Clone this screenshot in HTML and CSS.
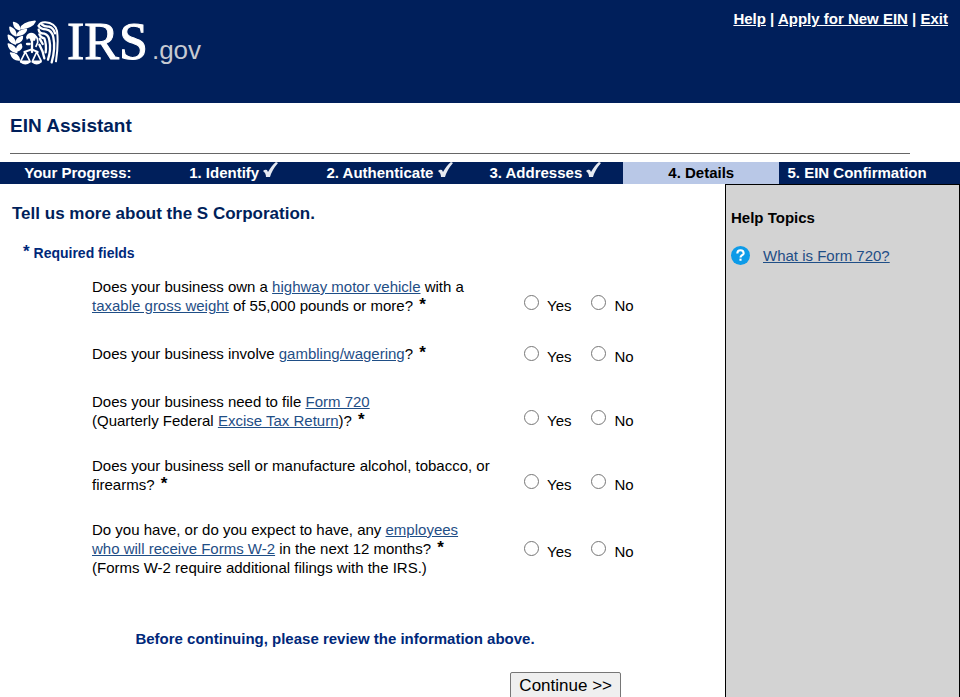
FILE: index.html
```html
<!DOCTYPE html>
<html lang="en">
<head>
    <meta charset="UTF-8">
    <meta name="viewport" content="width=device-width, initial-scale=1.0">
    <title>EIN Assistant</title>
    <link rel="stylesheet" href="styles.css">
</head>
<body>
    <header class="header">
        <div class="logo">
            <svg class="logo-eagle" viewBox="20 19 156 141" aria-hidden="true">
                <!-- Olive branch -->
                <g fill="#fff" stroke="#fff" stroke-width="5" stroke-linejoin="round">
                    <path d="M62 48 Q66 30 104 26 Q97 43 62 48Z"/>
                    <path d="M40 30 Q57 33 58 51 Q42 48 40 30Z"/>
                    <path d="M29 44 Q46 50 47 69 Q29 63 29 44Z"/>
                    <path d="M51 68 Q53 54 78 51 Q74 66 51 68Z"/>
                    <path d="M24 68 Q43 74 45 94 Q24 88 24 68Z"/>
                    <path d="M48 91 Q47 77 66 72 Q67 87 48 91Z"/>
                    <path d="M24 94 Q46 100 49 119 Q26 115 24 94Z"/>
                    <path d="M50 115 Q47 101 62 95 Q68 109 50 115Z"/>
                    <path d="M31 121 Q54 123 57 142 Q38 143 31 121Z"/>
                </g>
                <!-- Eagle head -->
                <path d="M77 74 Q79 62 92 60 Q105 60 108 71 L104 84 H90 L89 78 Q81 75 80 83Z" fill="#fff"/>
                <g fill="none" stroke="#fff" stroke-width="7" stroke-linecap="round" stroke-linejoin="round">
                    <path d="M105 70 Q113 75 112 90 L107 101" stroke-width="5"/>
                    <path d="M95 82 V118"/>
                    <path d="M80 94 H88"/>
                    <!-- Scales -->
                    <path d="M72 118 L94 110 L112 118" stroke-width="6"/>
                    <path d="M75 118 L62 144 M75 118 L88 144 M109 118 L97 144 M109 118 L122 144" stroke-width="5"/>
                    <path d="M62 147 Q75 157 88 147 H62 M97 147 Q109 157 121 147 H97"/>
                    <!-- Wing -->
                    <path d="M115 39 Q120 28 135 29 Q164 31 170 55 Q175 92 167 146" stroke-width="6"/>
                    <path d="M115 40 Q122 50 137 50 Q155 53 159 74 Q166 108 154 149"/>
                    <path d="M124 35 Q133 43 146 42 Q160 46 164 62"/>
                    <path d="M115 51 Q116 63 132 63 Q144 66 147 82 Q153 110 143 141"/>
                    <path d="M117 65 Q121 75 132 77 Q139 96 136 119"/>
                    <path d="M118 78 L127 94"/>
                    <path d="M117 96 Q128 115 132 137"/>
                </g>
            </svg>
            <span class="logo-irs">IRS</span><span class="logo-gov">.gov</span>
        </div>
        <nav class="top-links">
            <a href="#">Help</a> | <a href="#">Apply for New EIN</a> | <a href="#">Exit</a>
        </nav>
    </header>

    <div class="title">
        <h1>EIN Assistant</h1>
    </div>

    <div class="progress">
        <div class="step">Your Progress:</div>
        <div class="step">1. Identify
            <svg class="check" viewBox="0 0 15 16"><path d="M0 9 Q2 7 4 8 L5 10 Q9 3 13 0 L15 1 Q9 8 7 15 H3 Q3 11 0 9Z"/></svg>
        </div>
        <div class="step">2. Authenticate
            <svg class="check" viewBox="0 0 15 16"><path d="M0 9 Q2 7 4 8 L5 10 Q9 3 13 0 L15 1 Q9 8 7 15 H3 Q3 11 0 9Z"/></svg>
        </div>
        <div class="step">3. Addresses
            <svg class="check" viewBox="0 0 15 16"><path d="M0 9 Q2 7 4 8 L5 10 Q9 3 13 0 L15 1 Q9 8 7 15 H3 Q3 11 0 9Z"/></svg>
        </div>
        <div class="step current">4. Details</div>
        <div class="step">5. EIN Confirmation</div>
    </div>

    <div class="content">
        <main class="main">
            <h2>Tell us more about the S Corporation.</h2>
            <p class="required"><span class="star">*</span> Required fields</p>

            <form class="form">
                <div class="questions">
                    <div class="question" role="radiogroup" aria-labelledby="q1">
                        <p id="q1">Does your business own a <a href="#">highway motor vehicle</a> with a<br><a href="#">taxable gross weight</a> of 55,000 pounds or more? <span class="star">*</span></p>
                        <div class="answers">
                            <input type="radio" name="vehicle" id="vehicle-yes"><label for="vehicle-yes">Yes</label>
                            <input type="radio" name="vehicle" id="vehicle-no"><label for="vehicle-no">No</label>
                        </div>
                    </div>
                    <div class="question" role="radiogroup" aria-labelledby="q2">
                        <p id="q2">Does your business involve <a href="#">gambling/wagering</a>? <span class="star">*</span></p>
                        <div class="answers">
                            <input type="radio" name="gambling" id="gambling-yes"><label for="gambling-yes">Yes</label>
                            <input type="radio" name="gambling" id="gambling-no"><label for="gambling-no">No</label>
                        </div>
                    </div>
                    <div class="question" role="radiogroup" aria-labelledby="q3">
                        <p id="q3">Does your business need to file <a href="#">Form 720</a><br>(Quarterly Federal <a href="#">Excise Tax Return</a>)? <span class="star">*</span></p>
                        <div class="answers">
                            <input type="radio" name="excise" id="excise-yes"><label for="excise-yes">Yes</label>
                            <input type="radio" name="excise" id="excise-no"><label for="excise-no">No</label>
                        </div>
                    </div>
                    <div class="question" role="radiogroup" aria-labelledby="q4">
                        <p id="q4">Does your business sell or manufacture alcohol, tobacco, or<br>firearms? <span class="star">*</span></p>
                        <div class="answers">
                            <input type="radio" name="alcohol" id="alcohol-yes"><label for="alcohol-yes">Yes</label>
                            <input type="radio" name="alcohol" id="alcohol-no"><label for="alcohol-no">No</label>
                        </div>
                    </div>
                    <div class="question tall" role="radiogroup" aria-labelledby="q5">
                        <p id="q5">Do you have, or do you expect to have, any <a href="#">employees<br>who will receive Forms W-2</a> in the next 12 months? <span class="star">*</span><br>(Forms W-2 require additional filings with the IRS.)</p>
                        <div class="answers">
                            <input type="radio" name="employees" id="employees-yes"><label for="employees-yes">Yes</label>
                            <input type="radio" name="employees" id="employees-no"><label for="employees-no">No</label>
                        </div>
                    </div>
                </div>

                <p class="review">Before continuing, please review the information above.</p>
                <div class="buttons">
                    <button type="submit">Continue &gt;&gt;</button>
                </div>
            </form>
        </main>

        <aside class="help">
            <h3>Help Topics</h3>
            <div class="topic">
                <svg class="help-icon" viewBox="0 0 18 18" aria-hidden="true">
                    <circle cx="9" cy="9" r="9" fill="#0d9be8"/>
                    <path d="M6 7 Q6 4 9 4 Q12 4 12 7 Q12 8 10 9 Q9 10 9 11" fill="none" stroke="#fff" stroke-width="2"/>
                    <rect x="8" y="12" width="2" height="2" fill="#fff"/>
                </svg>
                <a href="#">What is Form 720?</a>
            </div>
        </aside>
    </div>
</body>
</html>
```
FILE: styles.css
```css
* {
    margin: 0;
    padding: 0;
    box-sizing: border-box;
}

body {
    font-family: "Liberation Sans", Arial, Helvetica, sans-serif;
    font-size: 15px;
    line-height: 19px;
    color: #000;
    background: #fff;
    min-height: 100vh;
    display: flex;
    flex-direction: column;
}

a {
    color: #1f4e86;
}

/* Header */
.header {
    display: flex;
    justify-content: space-between;
    align-items: flex-start;
    min-height: 103px;
    padding: 9px 12px 0 7px;
    background: #001f5b;
    color: #fff;
}

.logo {
    display: flex;
    align-items: baseline;
    line-height: 66px;
}

.logo-eagle {
    width: 52px;
    height: 47px;
    align-self: flex-start;
    margin: 10px 8px 0 0;
}

.logo-irs {
    font-family: "Liberation Serif", "Times New Roman", serif;
    font-size: 52px;
    -webkit-text-stroke: 1px #fff;
}

.logo-gov {
    margin-left: 4px;
    font-size: 26px;
    color: #c6cad2;
}

.top-links {
    font-weight: bold;
}

.top-links a {
    color: #fff;
}

/* Title */
.title {
    padding: 13px 50px 8px 10px;
}

.title h1 {
    padding-bottom: 17px;
    border-bottom: 1px solid #666;
    font-size: 19px;
    line-height: 20px;
    color: #001f5b;
}

/* Progress bar */
.progress {
    display: grid;
    grid-template-columns: repeat(6, 1fr);
    padding-right: 25px;
    background: #001f5b;
    color: #fff;
    font-weight: bold;
    line-height: 22px;
}

.step {
    text-align: center;
    white-space: nowrap;
}

.step.current {
    background: #b9c8e7;
    color: #000;
}

.check {
    width: 15px;
    height: 16px;
    fill: #e6eaf2;
}

/* Content */
.content {
    display: flex;
    flex: 1;
}

.main {
    flex: 1;
    padding-top: 20px;
}

.main h2 {
    padding-left: 12px;
    font-size: 17px;
    line-height: 20px;
    color: #001f5b;
}

.required {
    margin-top: 20px;
    padding-left: 23px;
    font-size: 14px;
    font-weight: bold;
    color: #00287a;
}

.star {
    font-size: 17px;
    font-weight: bold;
    line-height: 1px;
    vertical-align: 1px;
}

.questions {
    display: flex;
    flex-direction: column;
    gap: 26px;
    margin-top: 14px;
    padding-left: 92px;
}

.questions .star {
    margin-left: 2px;
}

.question {
    display: grid;
    grid-template-columns: 432px 1fr;
    align-items: center;
    min-height: 25px;
}

.answers {
    display: flex;
    align-items: flex-start;
    align-self: end;
    height: 25px;
}

.question.tall .answers {
    align-self: center;
}

.answers input {
    width: 15px;
    height: 15px;
    margin-top: 5px;
}

.answers label {
    margin: 6px 20px 0 8px;
}

.review {
    margin-top: 52px;
    padding-right: 55px;
    text-align: center;
    font-weight: bold;
    color: #00287a;
}

.buttons {
    display: flex;
    justify-content: flex-end;
    margin-top: 24px;
    padding-right: 104px;
}

.buttons button {
    padding: 3px 8px;
    font-family: inherit;
    font-size: 17px;
    line-height: 19px;
    color: #000;
    background: #efefef;
    border: 1px solid #767676;
    border-radius: 2px;
}

/* Help sidebar */
.help {
    width: 235px;
    padding: 23px 5px;
    background: #d3d3d3;
    border: 1px solid #000;
}

.help h3 {
    font-size: 15px;
}

.topic {
    display: flex;
    align-items: center;
    gap: 13px;
    margin-top: 19px;
}

.help-icon {
    width: 19px;
    height: 19px;
}
```
